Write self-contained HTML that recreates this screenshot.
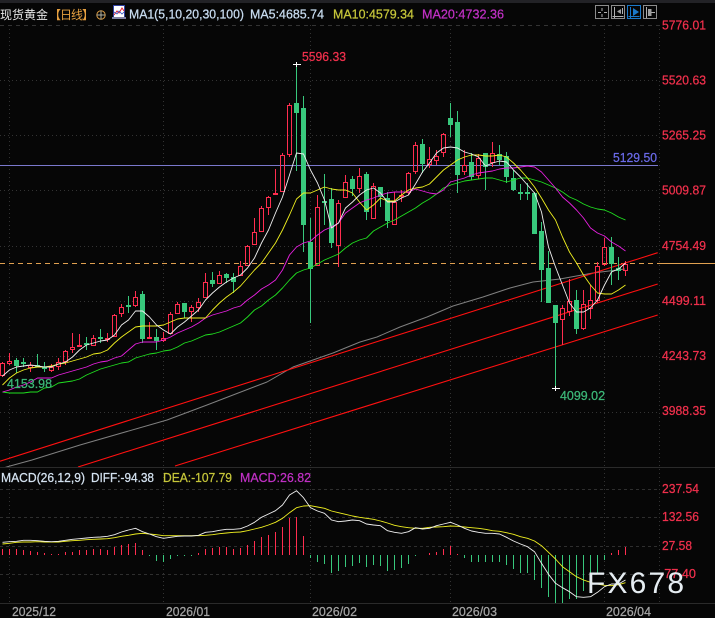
<!DOCTYPE html>
<html><head><meta charset="utf-8"><style>
html,body{margin:0;padding:0;background:#060606;width:715px;height:618px;overflow:hidden}
svg{display:block}
text{font-family:"Liberation Sans","Noto Sans CJK SC",sans-serif;font-size:13px;stroke-width:.25px;stroke:currentColor}
</style></head><body>
<svg width="715" height="618" viewBox="0 0 715 618" xmlns="http://www.w3.org/2000/svg">
<defs><clipPath id="c"><rect x="0" y="25" width="658" height="442"/></clipPath></defs>
<rect width="715" height="618" fill="#060606"/>
<rect width="715" height="3" fill="#222226"/>
<g fill="none" stroke-width="1">
<path d="M0 25.5H659" stroke="#333" stroke-dasharray="4 4"/>
<path d="M0 80.5H658M0 135.5H658M0 190.5H658M0 246.5H658M0 301.5H658M0 356.5H658M0 412.5H658" stroke="#333" stroke-dasharray="1 3"/>
<path d="M9.5 25V603M163.5 25V603M310.5 25V603M450.5 25V603M604.5 25V603M659.5 25V603" stroke="#333" stroke-dasharray="1 3"/>
<path d="M0 467.5H715M0 603.5H715" stroke="#2a2a2a"/>
<path d="M0 489.5H658M0 517.5H658M0 546.5H658M0 574.5H658" stroke="#2e2e2e" stroke-dasharray="3 3"/>
<path d="M0 165.5H658" stroke="#7a78cc"/>
<path d="M0 263.5H658" stroke="#e0a050" stroke-dasharray="5 4"/>
<path d="M658 263.5H715" stroke="#e0a050"/>
</g>
<g clip-path="url(#c)" fill="none" stroke-width="1" stroke-linejoin="round">
<polyline stroke="#808080" points="0,469 10,466 32,460 80,445 167,420 207,405 233,395 267,382 293,367 313,360 333,353 360,342 377,337 400,327 427,317 453,306 483,297 510,288 533,282 560,279 593,273 625,269"/>
<path stroke="#ff1010" stroke-width="1.1" d="M0 461.2L657.7 252.7M78 467L657.7 284M175 466L657.7 315"/>
</g>
<path fill="none" stroke="#38c87c" d="M16.5 358V373M23.5 358V367M37.5 354V367M44.5 362V372M86.5 337V350M100.5 329V343M128.5 296V313M142.5 291V343M156.5 329V350M184.5 303V318M212.5 272V287M226.5 273V283M233.5 273V293M296.5 63V171M303.5 96V252M310.5 218V323M324.5 174V225M331.5 188V248M352.5 176V196M366.5 172V220M380.5 187V207M387.5 192V228M422.5 139V173M450.5 103V137M457.5 111V193M471.5 153V180M485.5 153V190M499.5 145V165M506.5 152V183M513.5 170V191M520.5 184V200M527.5 183V200M534.5 192V234M541.5 222V302M548.5 251V303M555.5 305V388M576.5 290V334M611.5 237V285M618.5 257V280"/>
<path fill="#38c87c" d="M14 360h5v6h-5zM21 362h5v2h-5zM35 365h5v2h-5zM42 367h5v2h-5zM84 343h5v2h-5zM98 337h5v2h-5zM126 305h5v2h-5zM140 294h5v45h-5zM154 337h5v4h-5zM182 303h5v9h-5zM210 280h5v4h-5zM224 274h5v4h-5zM231 277h5v5h-5zM294 103h5v10h-5zM301 108h5v117h-5zM308 242h5v27h-5zM322 201h5v2h-5zM329 199h5v44h-5zM350 179h5v10h-5zM364 174h5v38h-5zM378 187h5v10h-5zM385 198h5v23h-5zM420 144h5v20h-5zM448 118h5v7h-5zM455 122h5v53h-5zM469 162h5v15h-5zM483 153h5v14h-5zM497 154h5v6h-5zM504 156h5v21h-5zM511 178h5v12h-5zM518 192h5v2h-5zM525 192h5v2h-5zM532 193h5v41h-5zM539 231h5v39h-5zM546 268h5v35h-5zM553 305h5v18h-5zM574 300h5v29h-5zM609 247h5v17h-5zM616 268h5v3h-5z"/>
<path fill="none" stroke="#ff2d4f" d="M2.5 362V363M.5 363.5h4V375.5h-4zM2.5 376V377M9.5 353V361M7.5 361.5h4V363.5h-4zM9.5 364V365M30.5 362V365M28.5 365.5h4V367.5h-4zM30.5 368V372M51.5 364V367M49.5 367.5h4V370.5h-4zM51.5 371V372M58.5 358V362M56.5 362.5h4V366.5h-4zM58.5 367V370M65.5 350V351M63.5 351.5h4V361.5h-4zM65.5 362V365M72.5 333V347M70.5 347.5h4V349.5h-4zM72.5 350V353M79.5 334V345M77.5 345.5h4V346.5h-4zM79.5 347V347M93.5 335V338M91.5 338.5h4V345.5h-4zM93.5 346V346M107.5 333V338M105.5 338.5h4V339.5h-4zM107.5 340V342M114.5 314V315M112.5 315.5h4V336.5h-4zM114.5 337V337M121.5 304V307M119.5 307.5h4V313.5h-4zM121.5 314V317M135.5 291V297M133.5 297.5h4V305.5h-4zM135.5 306V307M149.5 322V337M147.5 337.5h4V338.5h-4zM163.5 332V338M161.5 338.5h4V340.5h-4zM163.5 341V342M170.5 312V314M168.5 314.5h4V333.5h-4zM177.5 302V304M175.5 304.5h4V313.5h-4zM191.5 305V307M189.5 307.5h4V311.5h-4zM191.5 312V322M198.5 298V302M196.5 302.5h4V307.5h-4zM198.5 308V312M205.5 273V282M203.5 282.5h4V297.5h-4zM219.5 271V275M217.5 275.5h4V283.5h-4zM240.5 261V266M238.5 266.5h4V275.5h-4zM247.5 245V246M245.5 246.5h4V265.5h-4zM254.5 218V232M252.5 232.5h4V244.5h-4zM261.5 206V208M259.5 208.5h4V231.5h-4zM268.5 196V197M266.5 197.5h4V207.5h-4zM268.5 208V215M275.5 169V193M273.5 193.5h4V194.5h-4zM282.5 153V155M280.5 155.5h4V191.5h-4zM289.5 103V105M287.5 105.5h4V154.5h-4zM289.5 155V157M317.5 195V207M315.5 207.5h4V265.5h-4zM338.5 200V203M336.5 203.5h4V245.5h-4zM338.5 246V267M345.5 175V182M343.5 182.5h4V197.5h-4zM359.5 168V176M357.5 176.5h4V188.5h-4zM359.5 189V193M373.5 183V186M371.5 186.5h4V218.5h-4zM394.5 192V202M392.5 202.5h4V224.5h-4zM401.5 190V195M399.5 195.5h4V196.5h-4zM401.5 197V202M408.5 172V173M406.5 173.5h4V192.5h-4zM408.5 193V195M415.5 142V145M413.5 145.5h4V171.5h-4zM415.5 172V174M429.5 147V159M427.5 159.5h4V164.5h-4zM429.5 165V168M436.5 150V156M434.5 156.5h4V160.5h-4zM436.5 161V165M443.5 133V134M441.5 134.5h4V152.5h-4zM443.5 153V157M464.5 150V165M462.5 165.5h4V171.5h-4zM464.5 172V175M478.5 154V158M476.5 158.5h4V175.5h-4zM478.5 176V179M492.5 142V153M490.5 153.5h4V162.5h-4zM492.5 163V167M562.5 305V308M560.5 308.5h4V319.5h-4zM562.5 320V345M569.5 279V301M567.5 301.5h4V311.5h-4zM569.5 312V316M583.5 290V304M581.5 304.5h4V328.5h-4zM583.5 329V330M590.5 285V300M588.5 300.5h4V308.5h-4zM590.5 309V319M597.5 262V266M595.5 266.5h4V300.5h-4zM597.5 301V303M604.5 238V247M602.5 247.5h4V264.5h-4zM604.5 265V266M625.5 261V264M623.5 264.5h4V270.5h-4zM625.5 271V276"/>
<g fill="none" stroke-width=".9" stroke-linejoin="round">
<polyline stroke="#20e020" points="2.5,392 9.5,393 16.5,393 23.5,393 30.5,392 37.5,392 44.5,388 51.5,387 58.5,383 65.5,382 72.5,381 79.5,379 86.5,375 93.5,372 100.5,369 107.5,367 114.5,365 121.5,363 128.5,362 135.5,358 142.5,356 149.5,354 156.5,353 163.5,351 170.5,350 177.5,347 184.5,343 191.5,341 198.5,338 205.5,335 212.5,334 219.5,332 226.5,329 233.5,326 240.5,323 247.5,317 254.5,310 261.5,306 268.5,300 275.5,295 282.5,288 289.5,280 296.5,273 303.5,270 310.5,268 317.5,264 324.5,260 331.5,257 338.5,254 345.5,248 352.5,243 359.5,240 366.5,238 373.5,231 380.5,227 387.5,223 394.5,220 401.5,216 408.5,212 415.5,208 422.5,203 429.5,199 436.5,194 443.5,188 450.5,185 457.5,183 464.5,181 471.5,180 478.5,179 485.5,178 492.5,178 499.5,180 506.5,182 513.5,180 520.5,178 527.5,178 534.5,180 541.5,182 548.5,185 555.5,188 562.5,192 569.5,197 576.5,200 583.5,204 590.5,207 597.5,209 604.5,210 611.5,213 618.5,217 625.5,220"/>
<polyline stroke="#e820e0" points="2.5,392 9.5,390 16.5,387 23.5,385 30.5,382 37.5,378 44.5,378 51.5,378 58.5,375 65.5,373 72.5,371 79.5,369 86.5,367 93.5,364 100.5,362 107.5,361 114.5,358 121.5,356 128.5,350 135.5,344 142.5,342 149.5,342 156.5,342 163.5,340 170.5,337 177.5,333 184.5,330 191.5,327 198.5,323 205.5,318 212.5,315 219.5,313 226.5,311 233.5,308 240.5,306 247.5,300 254.5,295 261.5,289 268.5,285 275.5,280 282.5,270 289.5,255 296.5,247 303.5,243 310.5,241 317.5,235 324.5,230 331.5,227 338.5,223 345.5,213 352.5,208 359.5,203 366.5,200 373.5,198 380.5,195 387.5,193 394.5,192 401.5,192 408.5,192 415.5,189 422.5,191 429.5,193 436.5,194 443.5,190 450.5,182 457.5,180 464.5,178 471.5,175 478.5,173 485.5,172 492.5,171 499.5,169 506.5,168 513.5,168 520.5,167 527.5,166 534.5,167 541.5,172 548.5,180 555.5,188 562.5,197 569.5,203 576.5,210 583.5,218 590.5,228 597.5,233 604.5,236 611.5,242 618.5,246 625.5,251"/>
<polyline stroke="#f0f020" points="2.5,385 9.5,378 16.5,373 23.5,370 30.5,368 37.5,367 44.5,367 51.5,366 58.5,364 65.5,363 72.5,361 79.5,359 86.5,357 93.5,354 100.5,353 107.5,350 114.5,343 121.5,337 128.5,332 135.5,327 142.5,326 149.5,326 156.5,326 163.5,325 170.5,322 177.5,319 184.5,318 191.5,318 198.5,318 205.5,318 212.5,310 219.5,303 226.5,297 233.5,292 240.5,286 247.5,278 254.5,270 261.5,263 268.5,253 275.5,243 282.5,230 289.5,215 296.5,199 303.5,193 310.5,193 317.5,190 324.5,187 331.5,189 338.5,190 345.5,190 352.5,193 359.5,202 366.5,210 373.5,205 380.5,198 387.5,201 394.5,201 401.5,195 408.5,190 415.5,188 422.5,187 429.5,184 436.5,177 443.5,170 450.5,165 457.5,160 464.5,157 471.5,155 478.5,155 485.5,156 492.5,156 499.5,155 506.5,157 513.5,163 520.5,170 527.5,178 534.5,187 541.5,198 548.5,210 555.5,220 562.5,237 569.5,252 576.5,263 583.5,275 590.5,285 597.5,293 604.5,294 611.5,294 618.5,290 625.5,285"/>
<polyline stroke="#f0f0f0" points="2.5,376 9.5,370 16.5,367 23.5,366 30.5,365 37.5,366 44.5,367 51.5,367 58.5,364 65.5,362 72.5,357 79.5,350 86.5,345 93.5,343 100.5,341 107.5,340 114.5,335 121.5,325 128.5,320 135.5,311 142.5,311 149.5,317 156.5,325 163.5,330 170.5,334 177.5,327 184.5,322 191.5,316 198.5,310 205.5,300 212.5,293 219.5,287 226.5,282 233.5,278 240.5,275 247.5,268 254.5,258 261.5,243 268.5,230 275.5,213 282.5,197 289.5,175 296.5,153 303.5,154 310.5,170 317.5,183 324.5,200 331.5,228 338.5,223 345.5,208 352.5,202 359.5,195 366.5,190 373.5,188 380.5,193 387.5,202 394.5,202 401.5,198 408.5,195 415.5,184 422.5,172 429.5,163 436.5,153 443.5,148 450.5,147 457.5,148 464.5,152 471.5,154 478.5,157 485.5,166 492.5,163 499.5,161 506.5,162 513.5,170 520.5,177 527.5,185 534.5,193 541.5,212 548.5,247 555.5,267 562.5,285 569.5,303 576.5,312 583.5,312 590.5,308 597.5,300 604.5,285 611.5,272 618.5,269 625.5,263"/>
</g>
<path stroke="#fff" fill="none" d="M293 64.5h8M296.5 62v5M552 388.5h8M555.5 386v5"/>
<path fill="none" stroke="#ff2d4f" d="M2.5 555V549M9.5 555V549M16.5 555V549M23.5 555V550M30.5 555V551M37.5 555V552M44.5 555V553M51.5 555V554M58.5 555V554M65.5 555V552M72.5 555V552M79.5 555V550M86.5 555V550M93.5 555V549M100.5 555V549M107.5 555V550M114.5 555V547M121.5 555V545M128.5 555V544M135.5 555V543M142.5 555V550M198.5 555V553M205.5 555V549M212.5 555V548M219.5 555V547M226.5 555V547M233.5 555V549M240.5 555V548M247.5 555V545M254.5 555V541M261.5 555V537M268.5 555V535M275.5 555V532M282.5 555V527M289.5 555V518M296.5 555V517M303.5 555V536M429.5 555V553M436.5 555V552M443.5 555V549M450.5 555V546M457.5 555V554M611.5 555V553M618.5 555V550M625.5 555V547"/>
<path fill="none" stroke="#38c87c" d="M149.5 555V556M156.5 555V561M163.5 555V562M170.5 555V559M177.5 555V556M184.5 555V556M191.5 555V556M310.5 555V558M317.5 555V562M324.5 555V564M331.5 555V573M338.5 555V571M345.5 555V567M352.5 555V566M359.5 555V563M366.5 555V567M373.5 555V565M380.5 555V566M387.5 555V571M394.5 555V570M401.5 555V568M408.5 555V564M415.5 555V556M464.5 555V558M471.5 555V562M478.5 555V562M485.5 555V562M492.5 555V562M499.5 555V562M506.5 555V565M513.5 555V569M520.5 555V573M527.5 555V573M534.5 555V580M541.5 555V588M548.5 555V597M555.5 555V603M562.5 555V603M569.5 555V599M576.5 555V599M583.5 555V591M590.5 555V587M597.5 555V573M604.5 555V560"/>
<g fill="none" stroke-width=".9" stroke-linejoin="round">
<polyline stroke="#f0f020" points="2.5,544 9.5,543.3 16.5,542.3 23.5,542 30.5,542 37.5,541.7 44.5,542 51.5,542 58.5,542 65.5,541.3 72.5,540.7 79.5,540.3 86.5,539.7 93.5,539.3 100.5,539 107.5,538.7 114.5,537.7 121.5,536.3 128.5,535.3 135.5,534 142.5,533.3 149.5,534 156.5,534.7 163.5,535.7 170.5,535.7 177.5,535.7 184.5,535.7 191.5,535.7 198.5,535.7 205.5,535.3 212.5,534.7 219.5,533.7 226.5,533 233.5,532.3 240.5,532 247.5,530.7 254.5,529 261.5,527.3 268.5,525 275.5,522.3 282.5,518.3 289.5,512.7 296.5,507.7 303.5,506 310.5,505.7 317.5,507 324.5,508.3 331.5,511 338.5,512.7 345.5,514.3 352.5,516 359.5,517.3 366.5,518.3 373.5,519.3 380.5,521 387.5,523 394.5,525.3 401.5,526.7 408.5,527.7 415.5,528.3 422.5,528.3 429.5,527.3 436.5,527 443.5,526.7 450.5,526 457.5,526.3 464.5,527 471.5,527.7 478.5,528.3 485.5,529.3 492.5,530.7 499.5,531.3 506.5,532.7 513.5,534.3 520.5,536.7 527.5,538.3 534.5,541 541.5,545.7 548.5,552.3 555.5,559 562.5,566.7 569.5,571.7 576.5,576.7 583.5,580 590.5,582.3 597.5,584 604.5,585.3 611.5,585.7 618.5,584.7 625.5,582.7"/>
<polyline stroke="#f0f0f0" points="2.5,542.3 9.5,541.7 16.5,541.3 23.5,540.3 30.5,540.3 37.5,540.7 44.5,541.3 51.5,541.7 58.5,541.3 65.5,540.3 72.5,539.3 79.5,538.7 86.5,538 93.5,537.3 100.5,537 107.5,536.3 114.5,534.7 121.5,532 128.5,530 135.5,528.3 142.5,531.7 149.5,534 156.5,536.7 163.5,538.3 170.5,537.3 177.5,536.3 184.5,536 191.5,536 198.5,535.3 205.5,532.3 212.5,531.7 219.5,530.3 226.5,529.3 233.5,529.3 240.5,528.7 247.5,526 254.5,522.3 261.5,517.3 268.5,514 275.5,510.7 282.5,505 289.5,495 296.5,490.7 303.5,497.7 310.5,507.7 317.5,511 324.5,513.3 331.5,520 338.5,521.7 345.5,521 352.5,520 359.5,520.7 366.5,524 373.5,525 380.5,525.7 387.5,530.7 394.5,532.3 401.5,533.3 408.5,531.7 415.5,527.7 422.5,529 429.5,528.3 436.5,525.7 443.5,524 450.5,522.3 457.5,525 464.5,528.3 471.5,531 478.5,532.3 485.5,533.3 492.5,533.3 499.5,534 506.5,537.3 513.5,541 520.5,544 527.5,546.7 534.5,551.7 541.5,563.3 548.5,574.3 555.5,583.3 562.5,587.7 569.5,591.7 576.5,596.7 583.5,597.3 590.5,596.7 597.5,592.3 604.5,586.7 611.5,584 618.5,584 625.5,580"/>
</g>
<g style="color:#e8e8e8"><text x="0" y="19" fill="#e8e8e8" style="font-size:12px;stroke:none">现货黄金</text></g>
<text x="49" y="19" fill="#e6a040" style="font-size:12px;stroke:none" textLength="45">【日线】</text>
<g fill="none"><circle cx="101" cy="15" r="4.2" stroke="#d89a40"/><path d="M96.5 15h9M101 10.5v9" stroke="#b0b0a0"/></g>
<rect x="113.5" y="5.5" width="11" height="12" fill="#fff" stroke="#3040a0"/>
<path d="M114 15l3-4 2 2 3-5 2 3" stroke="#e82030" fill="none"/>
<path d="M114 12l3 2 2-3 3 3 2-2" stroke="#3050c0" fill="none" stroke-width=".8"/>
<rect x="112" y="17" width="14" height="2" fill="#8080a0"/>
<g style="color:#c8dcf0" fill="#c8dcf0">
<text x="129" y="18.5" textLength="115" lengthAdjust="spacingAndGlyphs">MA1(5,10,20,30,100)</text>
<text x="250" y="18.5" textLength="74" lengthAdjust="spacingAndGlyphs">MA5:4685.74</text>
</g>
<text x="333" y="18.5" fill="#c6c63a" style="color:#c6c63a" textLength="81" lengthAdjust="spacingAndGlyphs">MA10:4579.34</text>
<text x="422" y="18.5" fill="#c030c4" style="color:#c030c4" textLength="82" lengthAdjust="spacingAndGlyphs">MA20:4732.36</text>
<g fill="none" stroke="#8c8c8c">
<rect x="595.5" y="5.5" width="13" height="13"/><path d="M602 8v3M602 14v3M598 12.5h3M604 12.5h3" stroke="#b0b0b0"/>
<rect x="611.5" y="5.5" width="13" height="13"/><path d="M614.5 7v11M612.5 16.5h11M622.5 8v6" stroke="#b0b0b0"/><path d="M617 11.5l4-2.5v5z" fill="#a0a0a0" stroke="none"/>
<rect x="627.5" y="5.5" width="13" height="13" stroke="#1a78c8"/><path d="M630.5 7v11M628.5 16.5h11" stroke="#1a78c8"/><path d="M633 8l6 4-6 4z" fill="#1a78c8" stroke="none"/>
<rect x="643.5" y="5.5" width="13" height="13"/><path d="M646.5 7v11M648 12.5h7" stroke="#b0b0b0"/><path d="M648 9h3.5v7H648z" fill="#a0a0a0" stroke="none"/>
</g>
<g fill="#f0304c" style="color:#f0304c">
<text x="662" y="29.5" textLength="44" lengthAdjust="spacingAndGlyphs">5776.01</text>
<text x="662" y="84.5" textLength="44" lengthAdjust="spacingAndGlyphs">5520.63</text>
<text x="662" y="139.5" textLength="44" lengthAdjust="spacingAndGlyphs">5265.25</text>
<text x="662" y="194.5" textLength="44" lengthAdjust="spacingAndGlyphs">5009.87</text>
<text x="662" y="250" textLength="44" lengthAdjust="spacingAndGlyphs">4754.49</text>
<text x="662" y="305" textLength="44" lengthAdjust="spacingAndGlyphs">4499.11</text>
<text x="662" y="360" textLength="44" lengthAdjust="spacingAndGlyphs">4243.73</text>
<text x="662" y="415" textLength="44" lengthAdjust="spacingAndGlyphs">3988.35</text>
<text x="662" y="493" textLength="37" lengthAdjust="spacingAndGlyphs">237.54</text>
<text x="662" y="521" textLength="37" lengthAdjust="spacingAndGlyphs">132.56</text>
<text x="662" y="550" textLength="30" lengthAdjust="spacingAndGlyphs">27.58</text>
<text x="660" y="578" textLength="36" lengthAdjust="spacingAndGlyphs">-77.40</text>
<text x="302" y="61" textLength="44" lengthAdjust="spacingAndGlyphs">5596.33</text>
</g>
<text x="613" y="162" fill="#6a6ae8" style="color:#6a6ae8" textLength="44" lengthAdjust="spacingAndGlyphs">5129.50</text>
<g fill="#3cb878" style="color:#3cb878">
<text x="560" y="400" textLength="45" lengthAdjust="spacingAndGlyphs">4099.02</text>
<text x="7" y="388" textLength="45" lengthAdjust="spacingAndGlyphs">4153.98</text>
</g>
<g fill="#d4e2f0" style="color:#d4e2f0">
<text x="1" y="482" textLength="84" lengthAdjust="spacingAndGlyphs">MACD(26,12,9)</text>
<text x="91" y="482" textLength="63" lengthAdjust="spacingAndGlyphs">DIFF:-94.38</text>
</g>
<text x="163" y="482" fill="#c6c63a" style="color:#c6c63a" textLength="69" lengthAdjust="spacingAndGlyphs">DEA:-107.79</text>
<text x="240" y="482" fill="#c030c4" style="color:#c030c4" textLength="71" lengthAdjust="spacingAndGlyphs">MACD:26.82</text>
<g fill="#a4a4a4" style="color:#a4a4a4">
<text x="12" y="616" textLength="44" lengthAdjust="spacingAndGlyphs">2025/12</text>
<text x="166" y="616" textLength="44" lengthAdjust="spacingAndGlyphs">2026/01</text>
<text x="312" y="616" textLength="45" lengthAdjust="spacingAndGlyphs">2026/02</text>
<text x="452" y="616" textLength="45" lengthAdjust="spacingAndGlyphs">2026/03</text>
<text x="606" y="616" textLength="45" lengthAdjust="spacingAndGlyphs">2026/04</text>
</g>
<text x="587" y="593" fill="#e6edf2" style="font-size:30px;stroke:none" textLength="97">FX678</text>
</svg>
</body></html>
